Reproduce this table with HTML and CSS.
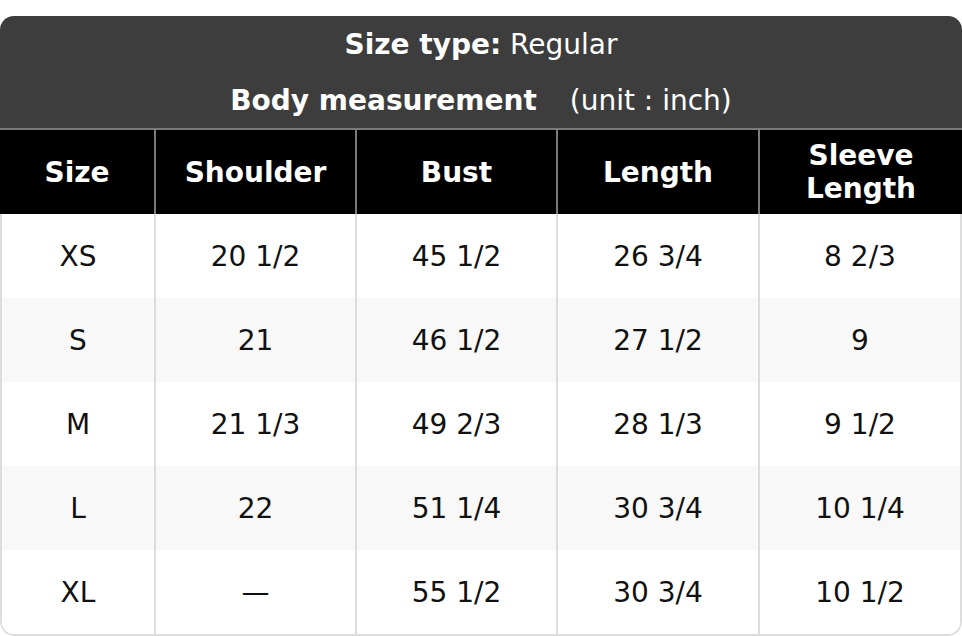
FILE: index.html
```html
<!DOCTYPE html>
<html lang="en">
<head>
<meta charset="utf-8">
<title>Size chart</title>
<link rel="stylesheet" href="styles.css">
</head>
<body>
<div class="chart">
  <div class="title">
    <div class="title-line"><b>Size type:</b> Regular</div>
    <div class="title-line"><b>Body measurement</b><span class="unit">(unit : inch)</span></div>
  </div>
  <div class="thead">
    <div class="th">Size</div>
    <div class="th">Shoulder</div>
    <div class="th">Bust</div>
    <div class="th">Length</div>
    <div class="th">Sleeve<br>Length</div>
  </div>
  <div class="tbody">
    <div class="row"><div class="td">XS</div><div class="td">20 1/2</div><div class="td">45 1/2</div><div class="td">26 3/4</div><div class="td">8 2/3</div></div>
    <div class="row alt"><div class="td">S</div><div class="td">21</div><div class="td">46 1/2</div><div class="td">27 1/2</div><div class="td">9</div></div>
    <div class="row"><div class="td">M</div><div class="td">21 1/3</div><div class="td">49 2/3</div><div class="td">28 1/3</div><div class="td">9 1/2</div></div>
    <div class="row alt"><div class="td">L</div><div class="td">22</div><div class="td">51 1/4</div><div class="td">30 3/4</div><div class="td">10 1/4</div></div>
    <div class="row"><div class="td">XL</div><div class="td">—</div><div class="td">55 1/2</div><div class="td">30 3/4</div><div class="td">10 1/2</div></div>
  </div>
</div>
</body>
</html>
```
FILE: styles.css
```css
html, body {
  margin: 0;
  padding: 0;
  background: #ffffff;
}
body {
  font-family: "DejaVu Sans", "Noto Sans", sans-serif;
  font-size: 28px;
  color: #111111;
}
.chart {
  margin-top: 16px;
  border-radius: 14px;
  overflow: hidden;
}
.title {
  background: #3d3d3d;
  color: #ffffff;
  border-bottom: 2px solid #7a7a7a;
}
.title-line {
  height: 56px;
  display: flex;
  align-items: center;
  justify-content: center;
  white-space: pre;
}
.title-line b {
  font-weight: bold;
}
.unit {
  margin-left: 33px;
}
.thead {
  display: grid;
  grid-template-columns: 156px 201px 201px 202px 1fr;
  background: #000000;
  color: #ffffff;
  font-weight: bold;
}
.th {
  height: 84px;
  box-sizing: border-box;
  display: flex;
  align-items: center;
  justify-content: center;
  text-align: center;
  line-height: 33px;
  border-right: 2px solid #7a7a7a;
}
.th:last-child {
  border-right: none;
}
.tbody {
  border: 2px solid #dddddd;
  border-top: none;
  border-radius: 0 0 14px 14px;
  overflow: hidden;
}
.row {
  display: grid;
  grid-template-columns: 154px 201px 201px 202px 1fr;
  background: #ffffff;
}
.row.alt {
  background: #f8f8f8;
}
.td {
  height: 84px;
  box-sizing: border-box;
  display: flex;
  align-items: center;
  justify-content: center;
  border-right: 2px solid #dddddd;
}
.td:last-child {
  border-right: none;
}
```
